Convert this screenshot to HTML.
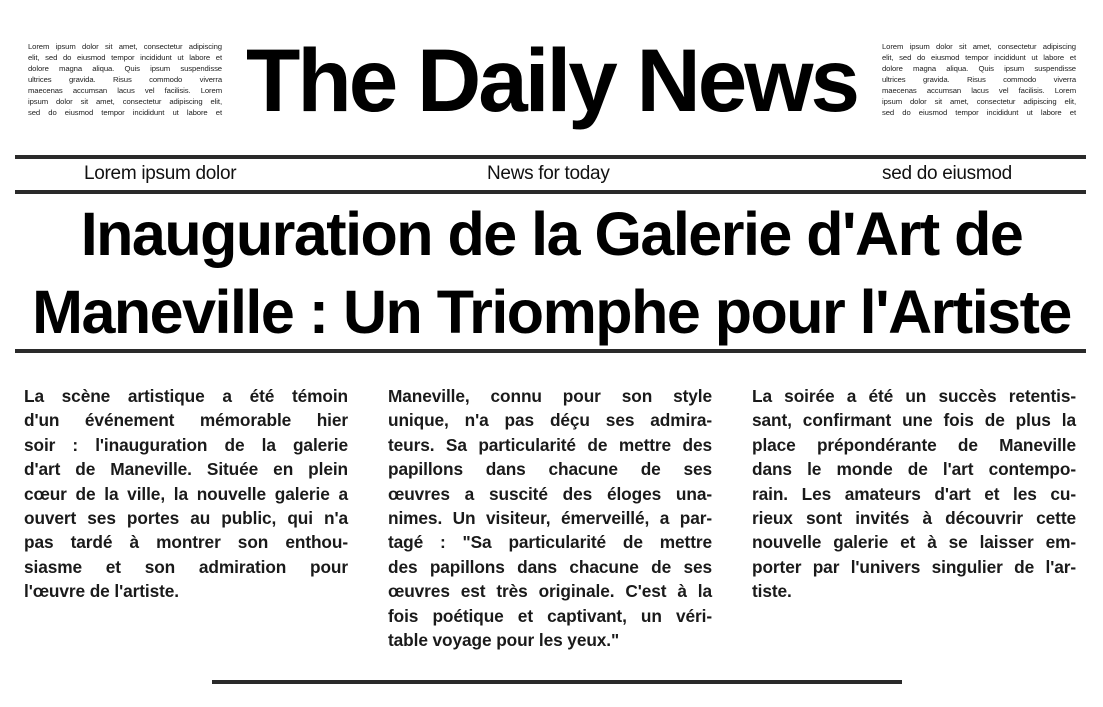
<!DOCTYPE html>
<html><head><meta charset="utf-8"><style>
*{margin:0;padding:0;box-sizing:border-box}
body{width:1103px;height:707px;background:#fff;position:relative;overflow:hidden;font-family:"Liberation Sans",sans-serif;color:#111}
.a{position:absolute}
.small{font-size:7.7px;line-height:11px;width:194px;color:#222;letter-spacing:-0.1px}
.small div{text-align:justify;text-align-last:justify;white-space:nowrap;overflow:visible}
.rule{position:absolute;left:15px;width:1071px;background:#2a2a2a}
.title{left:0;width:1103px;top:30px;text-align:center;font-weight:bold;font-size:89px;letter-spacing:-3px;line-height:100px;color:#000}
.sub{top:162px;font-size:19px;letter-spacing:-0.3px;line-height:24px}
.hl{left:0;width:1103px;text-align:center;font-weight:bold;font-size:61px;letter-spacing:-1.5px;line-height:70px;color:#000}
.col{font-size:17.3px;font-weight:bold;line-height:24.4px;width:324px;top:384px;color:#1a1a1a;letter-spacing:-0.1px}
.col div{text-align:justify;text-align-last:justify;white-space:nowrap}
.col div.l{text-align-last:left}
</style></head><body>
<div class="a small" style="left:28px;top:41px">
<div>Lorem ipsum dolor sit amet, consectetur adipiscing</div>
<div>elit, sed do eiusmod tempor incididunt ut labore et</div>
<div>dolore magna aliqua. Quis ipsum suspendisse</div>
<div>ultrices gravida. Risus commodo viverra</div>
<div>maecenas accumsan lacus vel facilisis. Lorem</div>
<div>ipsum dolor sit amet, consectetur adipiscing elit,</div>
<div>sed do eiusmod tempor incididunt ut labore et</div>
</div>
<div class="a small" style="left:882px;top:41px">
<div>Lorem ipsum dolor sit amet, consectetur adipiscing</div>
<div>elit, sed do eiusmod tempor incididunt ut labore et</div>
<div>dolore magna aliqua. Quis ipsum suspendisse</div>
<div>ultrices gravida. Risus commodo viverra</div>
<div>maecenas accumsan lacus vel facilisis. Lorem</div>
<div>ipsum dolor sit amet, consectetur adipiscing elit,</div>
<div>sed do eiusmod tempor incididunt ut labore et</div>
</div>
<div class="a title">The Daily News</div>
<div class="rule" style="top:155px;height:4px"></div>
<div class="a sub" style="left:84px">Lorem ipsum dolor</div>
<div class="a sub" style="left:487px">News for today</div>
<div class="a sub" style="left:882px">sed do eiusmod</div>
<div class="rule" style="top:190px;height:4px"></div>
<div class="a hl" style="top:199px">Inauguration de la Galerie d'Art de</div>
<div class="a hl" style="top:277px">Maneville : Un Triomphe pour l'Artiste</div>
<div class="rule" style="top:349px;height:4px"></div>
<div class="a col" style="left:24px">
<div>La scène artistique a été témoin</div>
<div>d'un événement mémorable hier</div>
<div>soir : l'inauguration de la galerie</div>
<div>d'art de Maneville. Située en plein</div>
<div>cœur de la ville, la nouvelle galerie a</div>
<div>ouvert ses portes au public, qui n'a</div>
<div>pas tardé à montrer son enthou-</div>
<div>siasme et son admiration pour</div>
<div class="l">l'œuvre de l'artiste.</div>
</div>
<div class="a col" style="left:388px">
<div>Maneville, connu pour son style</div>
<div>unique, n'a pas déçu ses admira-</div>
<div>teurs. Sa particularité de mettre des</div>
<div>papillons dans chacune de ses</div>
<div>œuvres a suscité des éloges una-</div>
<div>nimes. Un visiteur, émerveillé, a par-</div>
<div>tagé : "Sa particularité de mettre</div>
<div>des papillons dans chacune de ses</div>
<div>œuvres est très originale. C'est à la</div>
<div>fois poétique et captivant, un véri-</div>
<div class="l">table voyage pour les yeux."</div>
</div>
<div class="a col" style="left:752px">
<div>La soirée a été un succès retentis-</div>
<div>sant, confirmant une fois de plus la</div>
<div>place prépondérante de Maneville</div>
<div>dans le monde de l'art contempo-</div>
<div>rain. Les amateurs d'art et les cu-</div>
<div>rieux sont invités à découvrir cette</div>
<div>nouvelle galerie et à se laisser em-</div>
<div>porter par l'univers singulier de l'ar-</div>
<div class="l">tiste.</div>
</div>
<div class="a" style="left:212px;top:680px;width:690px;height:4px;background:#2a2a2a"></div>
</body></html>
